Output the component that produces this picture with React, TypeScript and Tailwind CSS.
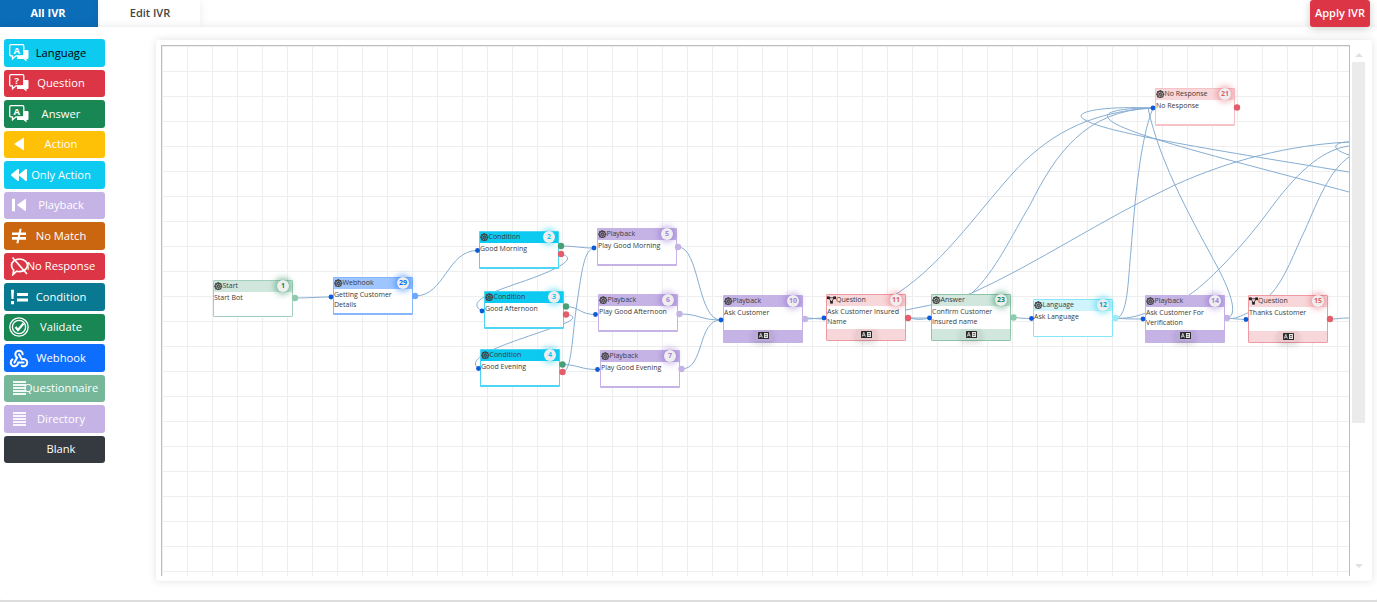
import type { ReactNode } from 'react';
import { FaBackward, FaDharmachakra } from 'react-icons/fa';
import { TbWebhook } from 'react-icons/tb';

function Bubbles({ mark, back }: { mark: string; back: string }) {
  return (
    <svg viewBox="0 0 20 18" className="h-[18px] w-[20px]">
      <path d="M8 6h10.5a1 1 0 0 1 1 1v7a1 1 0 0 1-1 1h-1v2.5l-3-2.5H8z" fill="#fff" />
      <path
        d="M2 .7h11.5a1.3 1.3 0 0 1 1.3 1.3v8.5a1.3 1.3 0 0 1-1.3 1.3H7l-3.5 3v-3H2A1.3 1.3 0 0 1 .7 10.5V2A1.3 1.3 0 0 1 2 .7z"
        fill={back}
        stroke="#fff"
        strokeWidth="1.3"
      />
      <text x="7.7" y="9.6" textAnchor="middle" fontSize="9.5" fontWeight="700" fill="#fff" fontFamily="Open Sans, sans-serif">
        {mark}
      </text>
    </svg>
  );
}

function Lines() {
  return (
    <div className="flex w-[13px] flex-col gap-[1px]">
      <div className="h-[2px] bg-white/90" />
      <div className="h-[2px] bg-white/90" />
      <div className="h-[2px] bg-white/90" />
      <div className="h-[2px] bg-white/90" />
      <div className="h-[2px] bg-white/90" />
    </div>
  );
}

function ShareIcon() {
  return (
    <svg viewBox="0 0 10 8" className="h-[8px] w-[9px] shrink-0">
      <path d="M2 1.500h6M2 1.500l3 5M8 1.500l-3 5" stroke="#222" strokeWidth="0.9" />
      <rect x="0" y="0" width="3" height="3" fill="#222" />
      <rect x="7" y="0" width="3" height="3" fill="#222" />
      <rect x="3.500" y="5" width="3" height="3" fill="#222" />
    </svg>
  );
}

function CardIcon() {
  return (
    <svg viewBox="0 0 11 7" className="h-[7px] w-[11px]">
      <rect x="0" y="0" width="11" height="7" rx="0.6" fill="#2b2b2b" />
      <path d="M1.200 5.600L2.800 1.300L4.400 5.600M1.900 4.300H3.700" fill="none" stroke="#fff" strokeWidth="0.7" />
      <rect x="6" y="1" width="4" height="5" fill="#e8e8e8" />
      <path d="M6.800 2.500h2.400M6.800 4.300h2.400" stroke="#2b2b2b" strokeWidth="0.7" />
    </svg>
  );
}

const tools: { label: string; className: string; icon?: ReactNode; iconClass?: string }[] = [
  { label: 'Language', className: 'bg-[#0dcaf0] text-black', icon: <Bubbles mark="A" back="#0dcaf0" />, iconClass: 'left-[5px]' },
  { label: 'Question', className: 'bg-[#dc3545] text-white', icon: <Bubbles mark="?" back="#dc3545" />, iconClass: 'left-[5px]' },
  { label: 'Answer', className: 'bg-[#198754] text-white', icon: <Bubbles mark="A" back="#198754" />, iconClass: 'left-[5px]' },
  {
    label: 'Action',
    className: 'bg-[#ffc107] text-white',
    icon: (
      <svg viewBox="0 0 10 13" className="h-[13px] w-[10px]">
        <path d="M10 0v13L0 6.500z" fill="#fff" />
      </svg>
    ),
    iconClass: 'left-[10px]',
  },
  { label: 'Only Action', className: 'bg-[#0dcaf0] text-white', icon: <FaBackward size={16} color="#fff" />, iconClass: 'left-[7px]' },
  {
    label: 'Playback',
    className: 'bg-[#c5b3e6] text-white',
    icon: (
      <svg viewBox="0 0 14 13" className="h-[13px] w-[14px]">
        <path d="M0 0h3v13H0z" fill="#fff" />
        <path d="M14 0v13L5 6.500z" fill="#fff" />
      </svg>
    ),
    iconClass: 'left-[8px]',
  },
  {
    label: 'No Match',
    className: 'bg-[#ca6510] text-white',
    icon: (
      <svg viewBox="0 0 14 15" className="h-[15px] w-[14px]">
        <path d="M0 4h14v2.600H0zM0 8.600h14v2.600H0z" fill="#fff" />
        <path d="M8.700 0L5.300 15" stroke="#fff" strokeWidth="2" />
      </svg>
    ),
    iconClass: 'left-[8px]',
  },
  {
    label: 'No Response',
    className: 'bg-[#dc3545] text-white',
    icon: (
      <svg viewBox="0 0 19 20" className="h-[20px] w-[19px]">
        <path d="M9.500 3c4.400 0 8 2.800 8 6.300s-3.600 6.300-8 6.300c-1 0-1.900-.1-2.800-.4L3 18.500l.7-4.300C2.300 13 1.500 11.200 1.500 9.300 1.500 5.800 5.100 3 9.500 3z" fill="none" stroke="#fff" strokeWidth="1.700" />
        <path d="M2.500 1.500L17 18" stroke="#fff" strokeWidth="1.700" />
      </svg>
    ),
    iconClass: 'left-[6px]',
  },
  {
    label: 'Condition',
    className: 'bg-[#087990] text-white',
    icon: (
      <svg viewBox="0 0 18 15" className="h-[15px] w-[18px]">
        <path d="M1 0h3l-.5 9.500h-2zM1 11.500h3V15H1z" fill="#fff" />
        <path d="M7 3.500h11v3H7zM7 9h11v3H7z" fill="#fff" />
      </svg>
    ),
    iconClass: 'left-[6px]',
  },
  {
    label: 'Validate',
    className: 'bg-[#198754] text-white',
    icon: (
      <svg viewBox="0 0 20 20" className="h-[20px] w-[20px]">
        <circle cx="10" cy="10" r="9.200" fill="none" stroke="#fff" strokeWidth="1.300" />
        <circle cx="10" cy="10" r="6.600" fill="none" stroke="#fff" strokeWidth="1.300" />
        <path d="M6.500 10l2.500 3 5.500-6.500" fill="none" stroke="#fff" strokeWidth="2.200" />
      </svg>
    ),
    iconClass: 'left-[5px]',
  },
  { label: 'Webhook', className: 'bg-[#0d6efd] text-white', icon: <TbWebhook size={22} color="#fff" strokeWidth={2.2} />, iconClass: 'left-[4px]' },
  { label: 'Questionnaire', className: 'bg-[#75b798] text-white', icon: <Lines />, iconClass: 'left-[9px]' },
  { label: 'Directory', className: 'bg-[#c5b3e6] text-white', icon: <Lines />, iconClass: 'left-[9px]' },
  { label: 'Blank', className: 'bg-[#343a40] text-white' },
];

type Kind = 'start' | 'webhook' | 'condition' | 'playback' | 'question' | 'noresponse' | 'answer' | 'language';

const kinds: Record<Kind, { head: string; foot: string; border: string; badge: string }> = {
  start: { head: 'bg-[#d1e7dd]', foot: 'bg-[#d1e7dd]', border: 'border-[#a3cfbb]', badge: 'text-[#198754] shadow-[0_0_6px_2px_rgba(25,135,84,0.55)]' },
  webhook: { head: 'bg-[#9ec5fe]', foot: 'bg-[#9ec5fe]', border: 'border-[#85b6fe] border-b-2', badge: 'text-[#0d6efd] shadow-[0_0_6px_2px_rgba(13,110,253,0.55)]' },
  condition: { head: 'bg-[#0dcaf0]', foot: 'bg-[#0dcaf0]', border: 'border-[#4dd6f3] border-b-2', badge: 'text-[#0dcaf0] shadow-[0_0_6px_2px_rgba(13,202,240,0.55)]' },
  playback: { head: 'bg-[#c5b3e6]', foot: 'bg-[#c5b3e6]', border: 'border-[#c5b3e6] border-b-2', badge: 'text-[#a585d8] shadow-[0_0_6px_2px_rgba(111,66,193,0.4)]' },
  question: { head: 'bg-[#f8d7da]', foot: 'bg-[#f8d7da]', border: 'border-[#ee9aa2]', badge: 'text-[#e35d6a] shadow-[0_0_6px_2px_rgba(220,53,69,0.4)]' },
  noresponse: { head: 'bg-[#f8d7da]', foot: 'bg-[#f8d7da]', border: 'border-[#f5c2c7] border-b-2', badge: 'text-[#e35d6a] shadow-[0_0_6px_2px_rgba(220,53,69,0.4)]' },
  answer: { head: 'bg-[#d1e7dd]', foot: 'bg-[#d1e7dd]', border: 'border-[#8fc5ab]', badge: 'text-[#198754] shadow-[0_0_6px_2px_rgba(25,135,84,0.55)]' },
  language: { head: 'bg-[#cff4fc]', foot: 'bg-[#cff4fc]', border: 'border-[#86e5f8]', badge: 'text-[#0aa2c0] shadow-[0_0_6px_2px_rgba(13,202,240,0.55)]' },
};

const nodes: { id: number; kind: Kind; title: string; lines: string[]; pos: string; foot?: boolean; share?: boolean }[] = [
  { id: 1, kind: 'start', title: 'Start', lines: ['Start Bot'], pos: 'left-[51px] top-[234px] h-[37px]' },
  { id: 29, kind: 'webhook', title: 'Webhook', lines: ['Getting Customer', 'Details'], pos: 'left-[171px] top-[231px] h-[38px]' },
  { id: 2, kind: 'condition', title: 'Condition', lines: ['Good Morning'], pos: 'left-[317px] top-[185px] h-[38px]' },
  { id: 3, kind: 'condition', title: 'Condition', lines: ['Good Afternoon'], pos: 'left-[322px] top-[245px] h-[38px]' },
  { id: 4, kind: 'condition', title: 'Condition', lines: ['Good Evening'], pos: 'left-[318px] top-[303px] h-[38px]' },
  { id: 5, kind: 'playback', title: 'Playback', lines: ['Play Good Morning'], pos: 'left-[435px] top-[182px] h-[38px]' },
  { id: 6, kind: 'playback', title: 'Playback', lines: ['Play Good Afternoon'], pos: 'left-[436px] top-[248px] h-[38px]' },
  { id: 7, kind: 'playback', title: 'Playback', lines: ['Play Good Evening'], pos: 'left-[438px] top-[304px] h-[38px]' },
  { id: 10, kind: 'playback', title: 'Playback', lines: ['Ask Customer'], pos: 'left-[561px] top-[249px] h-[48px]', foot: true },
  { id: 11, kind: 'question', title: 'Question', lines: ['Ask Customer Insured', 'Name'], pos: 'left-[664px] top-[248px] h-[47px]', foot: true, share: true },
  { id: 23, kind: 'answer', title: 'Answer', lines: ['Confirm Customer', 'Insured name'], pos: 'left-[769px] top-[248px] h-[47px]', foot: true },
  { id: 12, kind: 'language', title: 'Language', lines: ['Ask Language'], pos: 'left-[871px] top-[253px] h-[38px]' },
  { id: 14, kind: 'playback', title: 'Playback', lines: ['Ask Customer For', 'Verification'], pos: 'left-[983px] top-[249px] h-[48px]', foot: true },
  { id: 15, kind: 'question', title: 'Question', lines: ['Thanks Customer'], pos: 'left-[1086px] top-[249px] h-[48px]', foot: true, share: true },
  { id: 21, kind: 'noresponse', title: 'No Response', lines: ['No Response'], pos: 'left-[993px] top-[42px] h-[38px]' },
];

const edges = [
  'M295 298C310 298 316 297 331 297',
  'M415 296C445 296 447 250.500 477.500 250.500',
  'M561 246C575 246 580 248 594 248',
  'M561 254C578 258 560 268 530 279C505 288 462 300 482 311',
  'M566 306.500C580 307 580 314.500 595.500 314.500',
  'M566 314.500C580 316 570 322 560 325C530 337 460 355 478.500 368.500',
  'M562.500 364.500C580 365 580 369.500 597.500 369.500',
  'M562.500 372C572 372 572 335 577 303C582 270 584 250 594 248',
  'M678 247C700 247 697 320 721 320',
  'M679.500 314C700 314 700 320 721 320',
  'M681.500 369C705 369 697 320 721 320',
  'M805 319C812 319 816 318 824 318',
  'M805 318C812 318 816 319 824 319',
  'M908 318C915 318 921 318 929.500 318',
  'M908 317C915 320 921 320 929.500 318',
  'M1013.500 317.500C1020 318 1024 318.500 1031.500 318.500',
  'M1115.500 318C1125 319 1132 319 1143 319',
  'M1115.500 318C1125 319 1135 317 1146 313',
  'M1227 318C1235 319 1238 319 1246 319.500',
  'M1227 318C1235 320 1240 316 1250 312',
  'M1330 319C1338 319 1340 318 1349 318',
  'M890 298C940 268 975 215 1013 173C1045 138 1085 112 1153 108',
  'M972 293C995 272 1012 235 1030 205C1055 155 1085 110 1153 108',
  'M906 310C925 306 950 302 972 293C1040 262 1100 220 1175 185C1230 160 1290 145 1349 142',
  'M1115.500 318C1128 318 1128 280 1131 250C1135 200 1140 140 1153 108',
  'M1227 318C1238 316 1232 295 1218 268C1195 225 1160 165 1148 108',
  'M1189 295C1205 285 1240 250 1268 212C1295 175 1320 150 1349 146',
  'M1270 295C1285 280 1295 250 1305 230C1318 200 1330 170 1349 157',
  'M1153 108C1100 106 1070 112 1085 120C1105 132 1200 148 1349 172',
  'M1153 108C1120 108 1100 112 1110 120C1125 135 1250 165 1349 192',
  'M1349 142C1335 142 1328 148 1349 155',
];

const inputs = [
  [331, 297], [477.5, 250.5], [482, 311], [478.5, 368.5], [594, 248], [595.5, 314.5], [597.5, 369.5],
  [721, 320], [824, 318], [929.5, 318], [1031.5, 318.5], [1143, 319], [1246, 319.5], [1153, 108],
];

const outputs: [number, number, string][] = [
  [295, 298, '#8fcaac'], [415, 296, '#6ea8fe'],
  [561, 246, '#479f76'], [561, 254, '#e35d6a'], [566, 306.5, '#479f76'], [566, 314.5, '#e35d6a'],
  [562.5, 364.5, '#479f76'], [562.5, 372, '#e35d6a'],
  [678, 247, '#c5b3e6'], [679.5, 314, '#c5b3e6'], [681.5, 369, '#c5b3e6'], [805, 319, '#c5b3e6'],
  [908, 318, '#e35d6a'], [1013.5, 317.5, '#8fcaac'], [1115.5, 318, '#9eeaf9'], [1227, 318, '#c5b3e6'],
  [1330, 319, '#e35d6a'], [1237, 107.5, '#e35d6a'],
];

function FlowNode({ node }: { node: (typeof nodes)[number] }) {
  const k = kinds[node.kind];
  return (
    <div className={`absolute flex w-[80px] flex-col rounded-[1px] border bg-white text-[7px] leading-[10px] text-[#3a3a3a] ${k.border} ${node.pos}`}>
      <div className={`relative flex h-[11px] shrink-0 items-center pb-[1px] font-medium ${k.head}`}>
        {node.share ? <ShareIcon /> : <FaDharmachakra size={8.5} color="#444" className="shrink-0" />}
        <span>{node.title}</span>
        <span className={`absolute right-[3px] top-[-1px] flex h-[12px] w-[12px] items-center justify-center rounded-full bg-[#eeeeee] font-bold ${k.badge}`}>
          {node.id}
        </span>
      </div>
      <div className="flex-1 pt-[1px]">
        {node.lines.map((line) => (
          <div key={line}>{line}</div>
        ))}
      </div>
      {node.foot && (
        <div className={`flex h-[11px] shrink-0 justify-center ${k.foot}`}>
          <div className="flex w-[20px] items-center justify-center bg-black/5 shadow-[0_3px_6px_rgba(0,0,0,0.15)]">
            <CardIcon />
          </div>
        </div>
      )}
    </div>
  );
}

export default function App() {
  return (
    <div className="flex h-[602px] w-[1377px] flex-col overflow-hidden bg-white font-['Open_Sans',sans-serif]">
      <div className="flex h-[27px] shrink-0 justify-between pr-[7px]">
        <div className="flex gap-[2px]">
          <div className="flex w-[98px] items-center justify-center bg-[#0b6cb8] pr-[2px] text-[11px] font-bold text-white">All IVR</div>
          <div className="flex w-[100px] items-center justify-center bg-white text-[11px] font-semibold text-[#444] shadow-[0_0_10px_rgba(0,0,0,0.08)]">Edit IVR</div>
        </div>
        <button className="relative z-10 w-[60px] rounded-[3px] bg-[#dc3545] text-[11px] font-semibold text-white shadow-[0_2px_8px_rgba(0,0,0,0.2)]">
          Apply IVR
        </button>
      </div>
      <div className="flex h-[573px] shrink-0 rounded-[3px] bg-white pb-[19px] pt-[13px] shadow-[0_0_10px_rgba(0,0,0,0.1)]">
        <div className="-mt-[1px] flex w-[156px] shrink-0 flex-col gap-[3px] pl-[4px]">
          {tools.map((t) => (
            <div key={t.label} className={`relative flex h-[27.5px] w-[101px] shrink-0 items-center justify-center rounded-[3px] pl-[13px] pt-[1px] text-[11.2px] font-medium ${t.className}`}>
              {t.icon && <span className={`absolute top-1/2 -translate-y-1/2 ${t.iconClass}`}>{t.icon}</span>}
              <span className="whitespace-nowrap">{t.label}</span>
            </div>
          ))}
        </div>
        <div className="flex h-[541px] w-[1216px] rounded-[3px] bg-white pl-[5px] pt-[5px] shadow-[0_0_8px_rgba(0,0,0,0.12)]">
          <div className="relative h-[531px] w-[1189px] shrink-0 overflow-hidden border-l border-r border-t border-[#bdbdbd] bg-[linear-gradient(#eeeeee_1px,transparent_1px),linear-gradient(90deg,#eeeeee_1px,transparent_1px)] bg-[size:25px_25px]">
            <svg viewBox="162 46 1187 530" className="absolute left-0 top-0 h-[530px] w-[1187px]" fill="none" stroke="#86aed2" strokeWidth="1">
              {edges.map((d) => (
                <path key={d} d={d} />
              ))}
            </svg>
            {nodes.map((n) => (
              <FlowNode key={n.id} node={n} />
            ))}
            <svg viewBox="162 46 1187 530" className="absolute left-0 top-0 h-[530px] w-[1187px]">
              {inputs.map(([x, y]) => (
                <circle key={`${x}-${y}`} cx={x} cy={y} r="2.400" fill="#0d5bd8" />
              ))}
              {outputs.map(([x, y, c]) => (
                <circle key={`${x}-${y}`} cx={x} cy={y} r="3.200" fill={c} />
              ))}
            </svg>
          </div>
          <div className="ml-[2px] flex w-[13px] shrink-0 flex-col items-center pt-[8px]">
            <div className="h-0 w-0 border-x-[4px] border-b-[4px] border-x-transparent border-b-[#e0e0e0]" />
            <div className="mt-[5px] h-[361px] w-[13px] bg-[#ebebeb]" />
            <div className="mt-[141px] h-0 w-0 border-x-[4px] border-t-[4px] border-x-transparent border-t-[#e0e0e0]" />
          </div>
        </div>
      </div>
      <div className="h-[2px] shrink-0 bg-[#dddddd]" />
    </div>
  );
}
